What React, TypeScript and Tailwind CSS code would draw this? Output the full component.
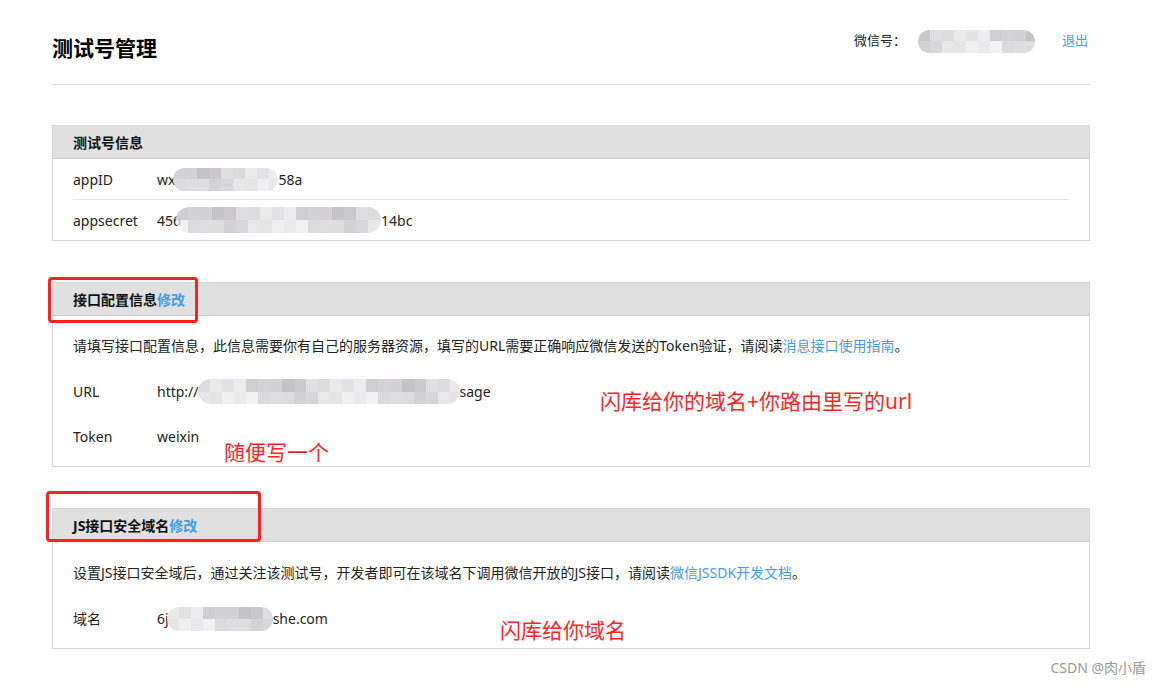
import React from "react";

const greys = [
  "#e2e2e4",
  "#d3d3d6",
  "#cac8cb",
  "#e9e9ea",
  "#cfcfd2",
  "#c4c4c7",
  "#dcdcdc",
  "#ececec",
  "#d3d1d3",
  "#dfdfe1",
];

const Blur = ({
  w,
  h,
  seed = 0,
  className = "",
}: {
  w: number;
  h: number;
  seed?: number;
  className?: string;
}) => {
  const cell = 12;
  const cols = Math.ceil(w / cell);
  return (
    <span
      className={`inline-flex flex-col rounded-full overflow-hidden align-middle ${className}`}
      style={{ width: w, height: h }}
    >
      {[0, 1].map((r) => (
        <span key={r} className="flex flex-1">
          {Array.from({ length: cols }).map((_, c) => (
            <span
              key={c}
              className="shrink-0 h-full"
              style={{
                width: cell,
                background: greys[(c * 7 + r * 3 + seed) % greys.length],
                opacity: r === 1 ? 0.75 : 1,
              }}
            />
          ))}
        </span>
      ))}
    </span>
  );
};

const Row = ({
  label,
  children,
  className = "",
}: {
  label: string;
  children: React.ReactNode;
  className?: string;
}) => (
  <div className={`flex items-center ${className}`}>
    <span className="w-[84px] shrink-0">{label}</span>
    <span className="flex items-center whitespace-nowrap">{children}</span>
  </div>
);

const PanelHead = ({ children }: { children: React.ReactNode }) => (
  <div className="h-[33px] bg-[#e0e0e0] border-b border-[#cdcdcd] px-[20px] flex items-center text-[14px] font-bold text-[#111]">
    {children}
  </div>
);

const Link = ({ children }: { children: React.ReactNode }) => (
  <span className="text-[#459ae9]">{children}</span>
);

export default function App() {
  return (
    <div className="relative w-full h-[685px] bg-white overflow-hidden font-[family-name:'Noto_Sans','Noto_Sans_CJK_SC',sans-serif] text-[14px] text-[#222]">
      <div className="ml-[52px] w-[1038px]">
        {/* top bar */}
        <div className="h-[85px] border-b border-[#d9d9d9] flex justify-between items-start">
          <h1 className="mt-[34px] text-[21px] leading-[28px] font-bold text-black">
            测试号管理
          </h1>
          <div className="mt-[31px] flex items-center h-[20px] text-[13px]">
            <span className="text-[#222]">微信号：</span>
            <Blur w={117} h={23} seed={2} className="ml-[12px]" />
            <span className="ml-[27px] mr-[2px] text-[#459ae9]">退出</span>
          </div>
        </div>

        {/* 测试号信息 */}
        <div className="mt-[40px] border border-[#d6d6d6]">
          <PanelHead>测试号信息</PanelHead>
          <div className="px-[20px]">
            <Row label="appID" className="h-[41px] border-b border-[#e6e6e6]">
              wx
              <Blur w={105} h={23} seed={1} className="-ml-[2px]" />
              58a
            </Row>
            <Row label="appsecret" className="h-[40px]">
              456
              <Blur w={205} h={26} seed={4} className="-ml-[5px]" />
              14bc
            </Row>
          </div>
        </div>

        {/* 接口配置信息 */}
        <div className="mt-[41px] border border-[#d6d6d6]">
          <PanelHead>
            接口配置信息<Link>修改</Link>
          </PanelHead>
          <div className="px-[20px] pt-[20px] pb-[7px]">
            <p className="leading-[20px] whitespace-nowrap">
              请填写接口配置信息，此信息需要你有自己的服务器资源，填写的URL需要正确响应微信发送的Token验证，请阅读
              <Link>消息接口使用指南</Link>。
            </p>
            <Row label="URL" className="mt-[13px] h-[45px]">
              http://
              <Blur w={262} h={25} seed={6} className="-ml-[1px]" />
              sage
            </Row>
            <Row label="Token" className="h-[45px]">
              weixin
            </Row>
          </div>
        </div>

        {/* JS接口安全域名 */}
        <div className="mt-[41px] border border-[#d6d6d6]">
          <PanelHead>
            JS接口安全域名<Link>修改</Link>
          </PanelHead>
          <div className="px-[20px] pt-[21px] pb-[7px]">
            <p className="leading-[20px] whitespace-nowrap">
              设置JS接口安全域后，通过关注该测试号，开发者即可在该域名下调用微信开放的JS接口，请阅读
              <Link>微信JSSDK开发文档</Link>。
            </p>
            <Row label="域名" className="mt-[13px] h-[45px]">
              6j
              <Blur w={106} h={24} seed={3} className="-ml-[2px]" />
              she.com
            </Row>
          </div>
        </div>
      </div>

      {/* annotations drawn on top of the screenshot */}
      <div className="absolute left-[48px] top-[277px] w-[150px] h-[46px] border-[3px] border-[#ff1f1f] rounded-[4px]" />
      <div className="absolute left-[46px] top-[491px] w-[215px] h-[51px] border-[3px] border-[#ff1f1f] rounded-[4px]" />
      <span className="absolute left-[600px] top-[387px] text-[21px] leading-[28px] text-[#ff2424] whitespace-nowrap">
        闪库给你的域名+你路由里写的url
      </span>
      <span className="absolute left-[224px] top-[438px] text-[21px] leading-[28px] text-[#ff2424] whitespace-nowrap">
        随便写一个
      </span>
      <span className="absolute left-[500px] top-[616px] text-[21px] leading-[28px] text-[#ff2424] whitespace-nowrap">
        闪库给你域名
      </span>
      <span className="absolute right-[16px] top-[658px] text-[14px] leading-[20px] text-[#999]">
        CSDN @肉小盾
      </span>
    </div>
  );
}
